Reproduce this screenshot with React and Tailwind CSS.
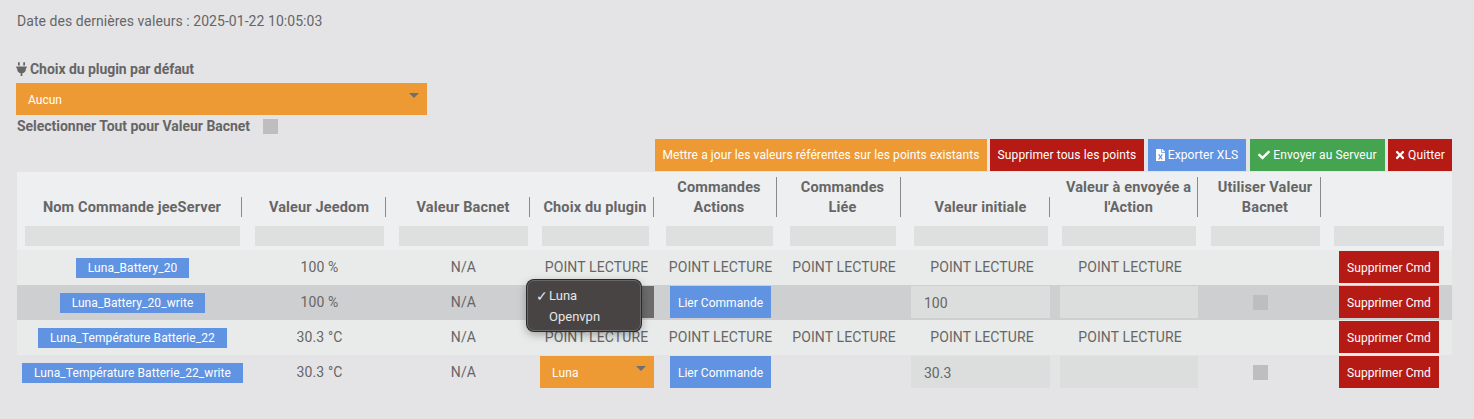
import React from "react";
import { FaPlug, FaCheck, FaTimes, FaFileExcel } from "react-icons/fa";

const widths = [225, 144, 144, 124, 123, 124, 149, 148, 123, 131];
const pads = [
  "pl-[8px] pr-[2px]",
  "pl-[13px] pr-[2px]",
  "pl-[13px] pr-[2px]",
  "pl-[12px] pr-[5px]",
  "pl-[12px] pr-[4px]",
  "pl-[13px] pr-[5px]",
  "pl-[13px] pr-[2px]",
  "pl-[12px] pr-[2px]",
  "pl-[13px] pr-[1px]",
  "pl-[13px] pr-[8px]",
];

const headers = [
  ["Nom Commande jeeServer"],
  ["Valeur Jeedom"],
  ["Valeur Bacnet"],
  ["Choix du plugin"],
  ["Commandes", "Actions"],
  ["Commandes", "Liée"],
  ["Valeur initiale"],
  ["Valeur à envoyée a", "l'Action"],
  ["Utiliser Valeur", "Bacnet"],
  [],
];

function Caret() {
  return <span className="absolute right-[8px] top-[10px] w-0 h-0 border-l-[5px] border-r-[5px] border-t-[5px] border-l-transparent border-r-transparent border-t-[#6f6f72]" />;
}

function Check() {
  return <span className="block w-[15px] h-[15px] bg-[#bebebe]" />;
}

function Cell({ i, className = "", children }) {
  return (
    <td className={`p-0 align-top ${className}`}>
      <div className={`h-[32px] mt-[1px] pt-px flex items-center justify-center tracking-[0.12px] ${pads[i]}`}>{children}</div>
    </td>
  );
}

function Point() {
  return <span className="ml-[2px] whitespace-nowrap">POINT LECTURE</span>;
}

function Name({ children }) {
  return <span className="h-[20px] px-[12px] bg-[#6093e2] text-white text-[12px] leading-[21px] tracking-[0.08px] whitespace-nowrap">{children}</span>;
}

function Supprimer() {
  return (
    <td className="p-0 align-top">
      <div className="h-[32px] mt-[1px] flex pl-[18px]">
        <button className="w-[100px] h-[32px] pt-px bg-[#b51a14] text-white text-[12px] tracking-[0.05px]">Supprimer Cmd</button>
      </div>
    </td>
  );
}

function ReadRow({ name, value }) {
  return (
    <tr className="h-[35px] bg-[#e9ebea]">
      <Cell i={0}><Name>{name}</Name></Cell>
      <Cell i={1}>{value}</Cell>
      <Cell i={2}>N/A</Cell>
      <Cell i={3}><Point /></Cell>
      <Cell i={4}><Point /></Cell>
      <Cell i={5}><Point /></Cell>
      <Cell i={6}><Point /></Cell>
      <Cell i={7}><Point /></Cell>
      <td className="p-0" />
      <Supprimer />
    </tr>
  );
}

function WriteRow({ name, value, initial, rowClass, selectClass }) {
  return (
    <tr className={`h-[35px] ${rowClass}`}>
      <Cell i={0}><Name>{name}</Name></Cell>
      <Cell i={1}>{value}</Cell>
      <Cell i={2}>N/A</Cell>
      <td className="p-0 align-top">
        <div className="h-[32px] mt-[1px] pl-[10px]">
          <div className={`relative h-[32px] w-[114px] pl-[12px] pt-px flex items-center text-[12px] text-white tracking-[0.2px] ${selectClass}`}>
            Luna
            <Caret />
          </div>
        </div>
      </td>
      <td className="p-0 align-top">
        <div className="h-[32px] mt-[1px] pl-[16px]">
          <button className="block w-[101px] h-[32px] pt-px bg-[#6093e2] text-white text-[12px] tracking-[0.03px]">Lier Commande</button>
        </div>
      </td>
      <td className="p-0" />
      <td className="p-0 align-top">
        <div className="h-[32px] mt-[1px] pl-[10px]">
          <div className="h-[32px] w-[139px] bg-[#dcdedd] pl-[13px] pt-[2px] flex items-center text-[14px]">{initial}</div>
        </div>
      </td>
      <td className="p-0 align-top">
        <div className="h-[32px] mt-[1px] pl-[10px]">
          <div className="h-[32px] w-[138px] bg-[#dcdedd]" />
        </div>
      </td>
      <td className="p-0 align-top">
        <div className="h-[32px] mt-[1px] flex items-center pl-[55px]"><Check /></div>
      </td>
      <Supprimer />
    </tr>
  );
}

function TopButton({ className, children }) {
  return (
    <button className={`h-[32px] flex items-center justify-center gap-[3px] text-white text-[12px] tracking-[0.1px] whitespace-nowrap ${className}`}>
      {children}
    </button>
  );
}

export default function App() {
  return (
    <div className="relative w-[1474px] h-[419px] overflow-hidden bg-[#e4e4e6] text-[#666666] text-[14px] font-['Roboto',sans-serif]">
      <div className="pl-[17px] pt-[13px] text-[14px] leading-[17px] tracking-[0.05px]">
        Date des dernières valeurs : 2025-01-22 10:05:03
      </div>

      <div className="pl-[16px] pt-[31px]">
        <div className="flex items-center gap-[3px] h-[16px] text-[14px] font-bold tracking-[-0.05px]">
          <FaPlug className="w-[11px] h-[14px]" />
          Choix du plugin par défaut
        </div>
        <div className="relative mt-[6px] w-[411px] h-[32px] bg-[#ed9a35] pl-[12px] pt-px flex items-center text-[12px] text-white">
          Aucun
          <Caret />
        </div>
        <div className="mt-[4px] h-[15px] pl-px flex items-center text-[14px] font-bold tracking-[-0.03px]">
          <span className="w-[246px] whitespace-nowrap">Selectionner Tout pour Valeur Bacnet</span>
          <Check />
        </div>
      </div>

      <div className="mt-[5px] ml-[655px] flex">
        <TopButton className="w-[332px] bg-[#ed9a35]">Mettre a jour les valeurs référentes sur les points existants</TopButton>
        <TopButton className="w-[154px] ml-[3px] bg-[#b51a14]">Supprimer tous les points</TopButton>
        <TopButton className="w-[98px] ml-[4px] bg-[#6093e2]"><FaFileExcel className="w-[9px] h-[12px]" />Exporter XLS</TopButton>
        <TopButton className="w-[135px] ml-[4px] bg-[#44a44f]"><FaCheck className="w-[12px] h-[12px]" />Envoyer au Serveur</TopButton>
        <TopButton className="w-[64px] ml-[3px] bg-[#b51a14]"><FaTimes className="w-[10px] h-[12px]" />Quitter</TopButton>
      </div>

      <table className="mt-px ml-[17px] w-[1435px] table-fixed border-collapse text-center text-[14px]">
        <colgroup>
          {widths.map((w, i) => (
            <col key={i} style={{ width: w }} />
          ))}
        </colgroup>
        <thead className="bg-[#eeeff1]">
          <tr className="h-[49px]">
            {headers.map((lines, i) => (
              <th key={i} className="p-0 pb-[4px] align-bottom font-bold text-[14.5px] leading-[22px] tracking-[0.15px]">
                {lines.length > 0 && (
                  <div className={`${pads[i]} ${i < 9 ? "border-r border-[#8a8a8a]" : ""}`}>
                    {lines.map((l) => (
                      <div key={l} className="h-[20px] whitespace-nowrap">{l}</div>
                    ))}
                  </div>
                )}
              </th>
            ))}
          </tr>
          <tr className="h-[29px]">
            {widths.map((_, i) => (
              <td key={i} className={`p-0 pt-[5px] pb-[4px] ${pads[i]}`}>
                <div className="h-[20px] bg-[#dee0df]" />
              </td>
            ))}
          </tr>
        </thead>
        <tbody>
          <ReadRow name="Luna_Battery_20" value="100 %" />
          <WriteRow name="Luna_Battery_20_write" value="100 %" initial="100" rowClass="bg-[#cecfd1]" selectClass="bg-[#6b6b6b]" />
          <ReadRow name="Luna_Température Batterie_22" value="30.3 °C" />
          <WriteRow name="Luna_Température Batterie_22_write" value="30.3 °C" initial="30.3" rowClass="" selectClass="bg-[#ed9a35]" />
          <tr />
        </tbody>
      </table>

      <div className="absolute left-[527px] top-[280px] w-[114px] h-[51px] rounded-[7px] bg-[#484444] border border-[#6a6868] ring-1 ring-[#2a2a2a] shadow-[0_3px_10px_rgba(0,0,0,0.35)] text-[13px] leading-[21px] text-[#e6e6e6] pl-[21px] pt-[4px]">
        <span className="absolute left-[8px] top-[5px] text-[14px]">✓</span>
        <div>Luna</div>
        <div>Openvpn</div>
      </div>
    </div>
  );
}
